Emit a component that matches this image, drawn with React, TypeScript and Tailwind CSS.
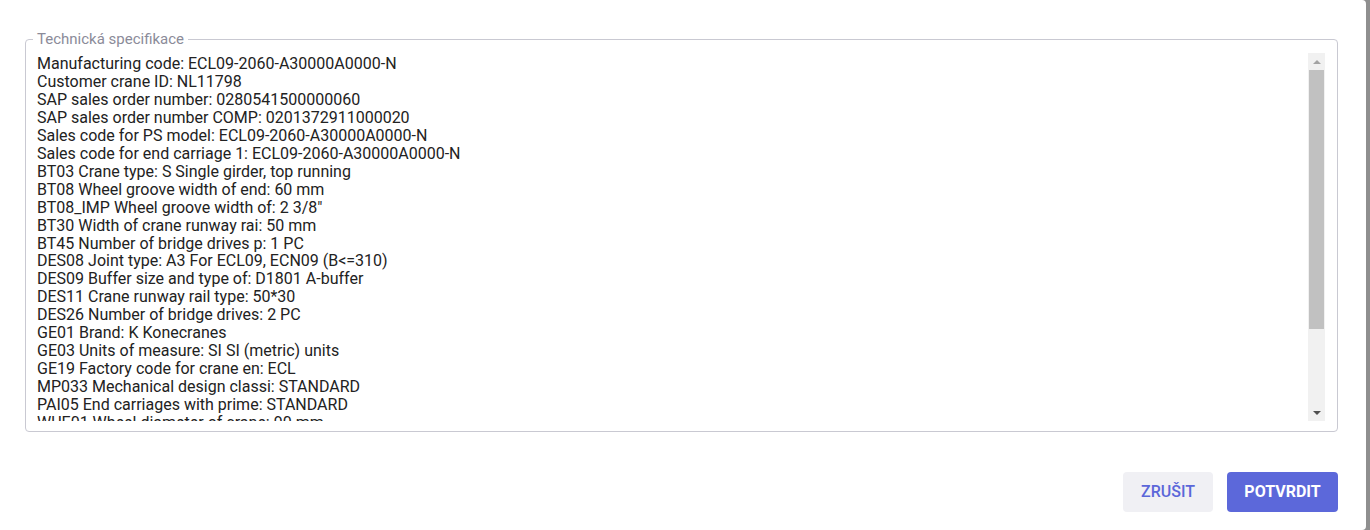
import React from "react";

const lines = [
  "Manufacturing code: ECL09-2060-A30000A0000-N",
  "Customer crane ID: NL11798",
  "SAP sales order number: 0280541500000060",
  "SAP sales order number COMP: 0201372911000020",
  "Sales code for PS model: ECL09-2060-A30000A0000-N",
  "Sales code for end carriage 1: ECL09-2060-A30000A0000-N",
  "BT03 Crane type: S Single girder, top running",
  "BT08 Wheel groove width of end: 60 mm",
  'BT08_IMP Wheel groove width of: 2 3/8"',
  "BT30 Width of crane runway rai: 50 mm",
  "BT45 Number of bridge drives p: 1 PC",
  "DES08 Joint type: A3 For ECL09, ECN09 (B<=310)",
  "DES09 Buffer size and type of: D1801 A-buffer",
  "DES11 Crane runway rail type: 50*30",
  "DES26 Number of bridge drives: 2 PC",
  "GE01 Brand: K Konecranes",
  "GE03 Units of measure: SI SI (metric) units",
  "GE19 Factory code for crane en: ECL",
  "MP033 Mechanical design classi: STANDARD",
  "PAI05 End carriages with prime: STANDARD",
  "WUE01 Wheel diameter of crane: 90 mm",
  "WUE02 Wheel material: GJS",
];

export default function App() {
  return (
    <div className="flex h-[530px] w-[1370px] bg-[#8f8f8f] font-['Roboto',sans-serif]">
      {/* dialog */}
      <div className="flex w-[1366px] flex-col rounded-r-[4px] bg-white pl-[25px] pr-[28px] pt-[31px]">
        <fieldset className="rounded-[4px] border border-[#c9c9d2] pb-[10px] pl-[11px] pr-[12px]">
          <legend className="-ml-[4px] px-[4px] text-[15px] leading-[16px] text-[#8b8b99]">
            Technická specifikace
          </legend>
          <div className="mt-[6px] flex h-[368px]">
            <div className="flex-1 overflow-hidden pt-[2px] text-[16px] leading-[17.95px] text-[#222222]">
              {lines.map((l) => (
                <div key={l} className="whitespace-pre">
                  {l}
                </div>
              ))}
            </div>
            {/* scrollbar */}
            <div className="flex w-[17px] flex-col bg-[#f1f1f1]">
              <div className="flex h-[17px] items-center justify-center">
                <div className="h-0 w-0 border-x-[4px] border-b-[4px] border-x-transparent border-b-[#a3a3a3]" />
              </div>
              <div className="mx-[1px] h-[259px] bg-[#c1c1c1]" />
              <div className="flex-1" />
              <div className="flex h-[17px] items-center justify-center">
                <div className="h-0 w-0 border-x-[4px] border-t-[4px] border-x-transparent border-t-[#505050]" />
              </div>
            </div>
          </div>
        </fieldset>
        <div className="mt-[40px] flex justify-end gap-[14px]">
          <button className="h-[40px] w-[90px] rounded-[4px] bg-[#f0f0f4] text-[16px] font-medium text-[#5b67d9]">
            ZRUŠIT
          </button>
          <button className="h-[40px] w-[111px] rounded-[4px] bg-[#5c68da] text-[16px] font-bold text-white">
            POTVRDIT
          </button>
        </div>
      </div>
    </div>
  );
}
